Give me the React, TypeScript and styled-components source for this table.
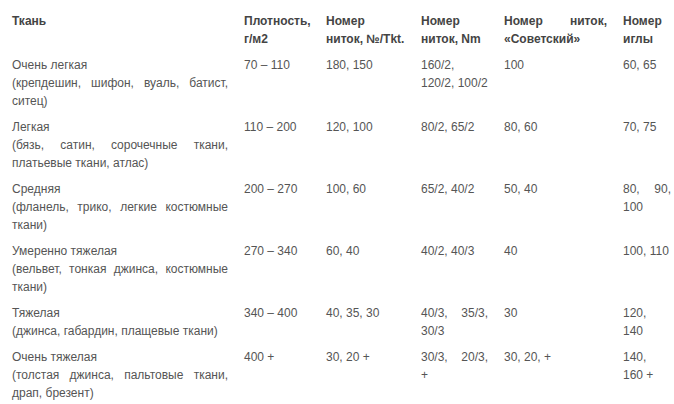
import React from 'react';
import styled, { createGlobalStyle } from 'styled-components';

const GlobalStyle = createGlobalStyle`
  html, body {
    margin: 0;
    padding: 0;
    background: #ffffff;
    overflow: hidden;
  }
  body {
    font-family: "Liberation Sans", Arial, sans-serif;
  }
`;

const Wrapper = styled.div`
  padding: 8px 0 0 4px;
  width: 674px;
  box-sizing: border-box;
  overflow: hidden;
`;

const Table = styled.table`
  border-collapse: collapse;
  table-layout: fixed;
  width: 675px;
  font-size: 12px;
  line-height: 18px;
  color: #555555;
`;

const Th = styled.th<{ $nowrap?: boolean }>`
  padding: 4px 8px;
  text-align: justify;
  vertical-align: top;
  font-weight: bold;
  color: #444444;
  white-space: ${(p) => (p.$nowrap ? 'nowrap' : 'normal')};
`;

const Td = styled.td`
  padding: 4px 8px;
  text-align: justify;
  vertical-align: top;
`;

const widths = [232, 82, 95, 83, 119, 64];

// a header given as several lines keeps those breaks
const headers: string[][] = [
  ['Ткань'],
  ['Плотность, г/м2'],
  ['Номер', 'ниток, №/Tkt.'],
  ['Номер ниток, Nm'],
  ['Номер ниток, «Советский»'],
  ['Номер иглы'],
];

interface Row {
  name: string;
  examples: string;
  density: string;
  tkt: string;
  nm: string;
  soviet: string;
  needle: string[];
}

const rows: Row[] = [
  {
    name: 'Очень легкая',
    examples: '(крепдешин, шифон, вуаль, батист, ситец)',
    density: '70 – 110',
    tkt: '180, 150',
    nm: '160/2, 120/2, 100/2',
    soviet: '100',
    needle: ['60, 65'],
  },
  {
    name: 'Легкая',
    examples: '(бязь, сатин, сорочечные ткани, платьевые ткани, атлас)',
    density: '110 – 200',
    tkt: '120, 100',
    nm: '80/2, 65/2',
    soviet: '80, 60',
    needle: ['70, 75'],
  },
  {
    name: 'Средняя',
    examples: '(фланель, трико, легкие костюмные ткани)',
    density: '200 – 270',
    tkt: '100, 60',
    nm: '65/2, 40/2',
    soviet: '50, 40',
    needle: ['80, 90, 100'],
  },
  {
    name: 'Умеренно тяжелая',
    examples: '(вельвет, тонкая джинса, костюмные ткани)',
    density: '270 – 340',
    tkt: '60, 40',
    nm: '40/2, 40/3',
    soviet: '40',
    needle: ['100, 110'],
  },
  {
    name: 'Тяжелая',
    examples: '(джинса, габардин, плащевые ткани)',
    density: '340 – 400',
    tkt: '40, 35, 30',
    nm: '40/3, 35/3, 30/3',
    soviet: '30',
    needle: ['120,', '140'],
  },
  {
    name: 'Очень тяжелая',
    examples: '(толстая джинса, пальтовые ткани, драп, брезент)',
    density: '400 +',
    tkt: '30, 20 +',
    nm: '30/3, 20/3, +',
    soviet: '30, 20, +',
    needle: ['140,', '160 +'],
  },
];

const Lines: React.FC<{ lines: string[] }> = ({ lines }) => (
  <>
    {lines.map((line, i) => (
      <React.Fragment key={i}>
        {i > 0 && <br />}
        {line}
      </React.Fragment>
    ))}
  </>
);

const App: React.FC = () => {
  return (
    <>
      <GlobalStyle />
      <Wrapper>
        <Table>
          <colgroup>
            {widths.map((w, i) => (
              <col key={i} style={{ width: w }} />
            ))}
          </colgroup>
          <thead>
            <tr>
              {headers.map((h) => (
                <Th key={h.join(' ')} $nowrap={h.length > 1}>
                  <Lines lines={h} />
                </Th>
              ))}
            </tr>
          </thead>
          <tbody>
            {rows.map((r) => (
              <tr key={r.name}>
                <Td>
                  {r.name}
                  <br />
                  {r.examples}
                </Td>
                <Td>{r.density}</Td>
                <Td>{r.tkt}</Td>
                <Td>{r.nm}</Td>
                <Td>{r.soviet}</Td>
                <Td>
                  <Lines lines={r.needle} />
                </Td>
              </tr>
            ))}
          </tbody>
        </Table>
      </Wrapper>
    </>
  );
};

export default App;
